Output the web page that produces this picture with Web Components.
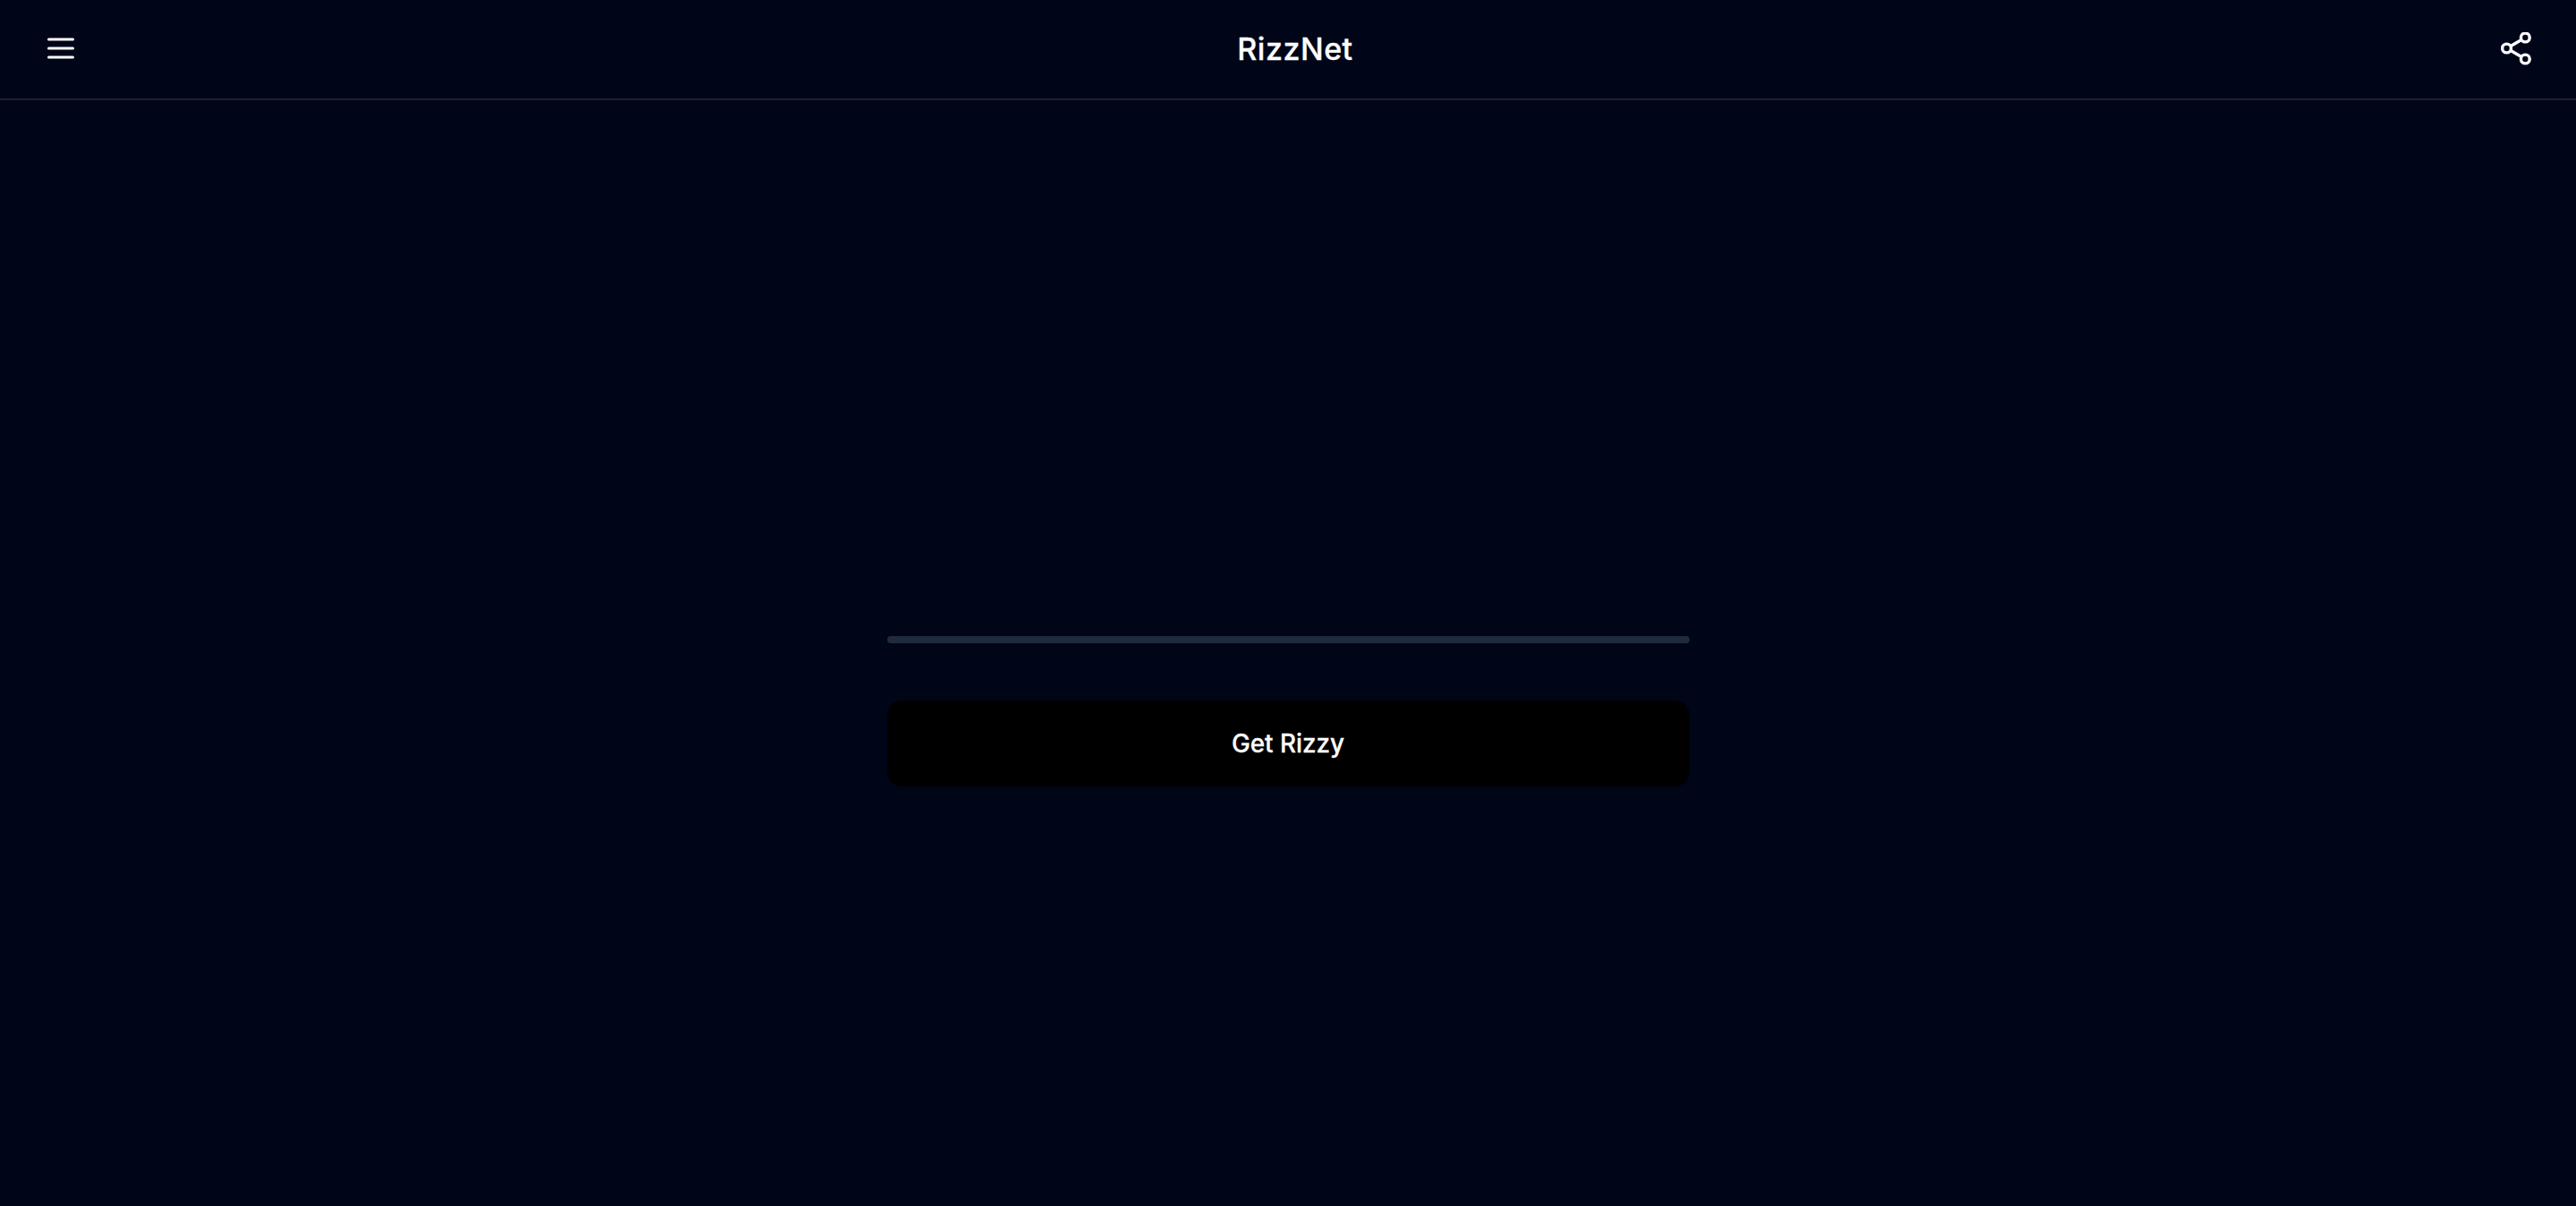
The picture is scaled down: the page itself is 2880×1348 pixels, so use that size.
<!DOCTYPE html>
<html>
<head>
<meta charset="utf-8">
<title>RizzNet</title>
<style>
  html, body { margin: 0; height: 100%; background: #010518; }
  body { display: flex; flex-direction: column; font-family: Inter, "Noto Sans", sans-serif; color: #fff; }
  rizz-main { flex: 1; }
</style>
</head>
<body>
<rizz-header title-text="RizzNet"></rizz-header>
<rizz-main>
  <rizz-progress></rizz-progress>
  <rizz-button>Get Rizzy</rizz-button>
</rizz-main>
<script>
(function () {
    class RizzHeader extends HTMLElement {
        constructor() {
            super();
            const root = this.attachShadow({ mode: "open" });
            root.innerHTML = `
                <style>
                    :host { display: flex; align-items: center; justify-content: space-between; height: 110px; padding: 0 50px 0 53px; border-bottom: 2px solid #1e2130; }
                    svg { display: block; fill: none; stroke: #fff; }
                    .menu { width: 47px; }
                    h1 { margin: 0 0 2px; font: 500 34px Inter, sans-serif; letter-spacing: 0.5px; color: #fff; -webkit-text-stroke: 0.3px #fff; }
                </style>
                <div class="menu">
                    <svg width="30" height="26" viewBox="0 0 30 26" stroke-width="3" stroke-linecap="round">
                        <path d="M1.5 2H28.5M1.5 12H28.5M1.5 22H28.5"/>
                    </svg>
                </div>
                <h1></h1>
                <svg width="34" height="38" viewBox="0 0 34 38" stroke-width="3.4">
                    <circle cx="27.3" cy="6" r="4.9"/>
                    <circle cx="6.5" cy="18" r="4.9"/>
                    <circle cx="27.3" cy="30" r="4.9"/>
                    <path d="M11 15.5L23 8.5M11 20.5L23 27.5"/>
                </svg>
            `;
            root.querySelector("h1").textContent = this.getAttribute("title-text");
        }
    }

    class RizzMain extends HTMLElement {
        constructor() {
            super();
            const root = this.attachShadow({ mode: "open" });
            root.innerHTML = `
                <style>
                    :host { display: flex; flex-direction: column; justify-content: center; align-items: center; }
                    .stack { display: flex; flex-direction: column; gap: 64px; width: 897px; }
                    .output { height: 66px; }
                </style>
                <div class="stack">
                    <div class="output"></div>
                    <slot></slot>
                </div>
            `;
        }
    }

    class RizzProgress extends HTMLElement {
        constructor() {
            super();
            const root = this.attachShadow({ mode: "open" });
            root.innerHTML = `
                <style>
                    :host { display: block; height: 8px; border-radius: 4px; background: #1e2b3e; }
                </style>
            `;
        }
    }

    class RizzButton extends HTMLElement {
        constructor() {
            super();
            const root = this.attachShadow({ mode: "open" });
            root.innerHTML = `
                <style>
                    :host { display: flex; align-items: center; justify-content: center; height: 96px; border-radius: 16px; background: #000; color: #fff; font: 500 27.8px Inter, sans-serif; -webkit-text-stroke: 0.3px #fff; cursor: pointer; }
                </style>
                <slot></slot>
            `;
        }
    }

    customElements.define("rizz-header", RizzHeader);
    customElements.define("rizz-main", RizzMain);
    customElements.define("rizz-progress", RizzProgress);
    customElements.define("rizz-button", RizzButton);
})();
</script>
</body>
</html>
